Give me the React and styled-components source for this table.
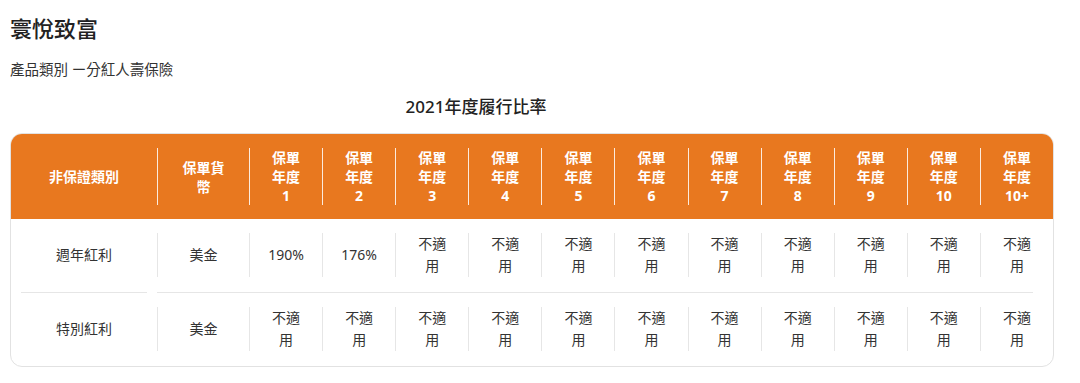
import React from "react";
import styled, { createGlobalStyle } from "styled-components";

const Global = createGlobalStyle`
  html, body { margin: 0; padding: 0; background: #fff; }
  body {
    font-family: "Noto Sans", "Noto Sans CJK TC", sans-serif;
    color: #333;
  }
`;

const Page = styled.div`
  padding: 11px 10px 0 10px;
  width: 1044px;
`;

const Title = styled.h1`
  margin: 0;
  font-size: 22px;
  line-height: 34px;
  font-weight: 500;
  color: #222;
`;

const Subtitle = styled.p`
  margin: 13px 0 0 0;
  font-size: 14.5px;
  line-height: 22px;
  color: #333;
`;

const Caption = styled.h2`
  margin: 14px 0 0 0;
  width: 932px;
  text-align: center;
  font-size: 17px;
  line-height: 26px;
  font-weight: 500;
  color: #222;
`;

const Card = styled.div`
  margin-top: 13px;
  border: 1px solid #e2e2e2;
  border-radius: 12px;
  overflow: hidden;
  display: grid;
  grid-template-columns: 146px 92px repeat(11, 1fr);
`;

const HeadCell = styled.div`
  background: #e8781f;
  padding: 14px 0 14px;
  display: flex;
`;

const HeadInner = styled.div`
  flex: 1;
  display: flex;
  align-items: center;
  justify-content: center;
  text-align: center;
  border-left: ${(p) => (p.$first ? "none" : "1px solid rgba(255,255,255,0.85)")};
  min-height: 55px;
  color: #fff;
  font-weight: 700;
  font-size: 14px;
  line-height: 19px;
`;

const Text = styled.span`
  display: block;
  max-width: ${(p) => p.$max || "40px"};
  word-break: break-all;
`;

const BodyCell = styled.div`
  padding: 14px 0 15px;
  display: flex;
`;

const BodyInner = styled.div`
  flex: 1;
  display: flex;
  align-items: center;
  justify-content: center;
  text-align: center;
  border-left: ${(p) => (p.$first ? "none" : "1px solid #e6e6e6")};
  min-height: 44px;
  font-size: 14px;
  line-height: 22px;
  color: #333;
`;

const DividerLeft = styled.div`
  grid-column: 1 / 2;
  height: 1px;
  background: #e6e6e6;
  margin: 0 10px 0 10px;
`;

const DividerRight = styled.div`
  grid-column: 2 / -1;
  height: 1px;
  background: #e6e6e6;
  margin: 0 20px 0 0;
`;

const years = ["1", "2", "3", "4", "5", "6", "7", "8", "9", "10", "10+"];

const rows = [
  { name: "週年紅利", cur: "美金", vals: ["190%", "176%", ...Array(9).fill("不適用")] },
  { name: "特別紅利", cur: "美金", vals: Array(11).fill("不適用") },
];

export default function App() {
  return (
    <>
      <Global />
      <Page>
        <Title>寰悅致富</Title>
        <Subtitle>產品類別 ー分紅人壽保險</Subtitle>
        <Caption>2021年度履行比率</Caption>
        <Card>
          <HeadCell>
            <HeadInner $first>
              <Text $max="120px">非保證類別</Text>
            </HeadInner>
          </HeadCell>
          <HeadCell>
            <HeadInner>
              <Text $max="48px">保單貨幣</Text>
            </HeadInner>
          </HeadCell>
          {years.map((y) => (
            <HeadCell key={y}>
              <HeadInner>
                <Text>
                  保單年度
                  <br />
                  {y}
                </Text>
              </HeadInner>
            </HeadCell>
          ))}
          {rows.map((r, i) => (
            <React.Fragment key={r.name}>
              {i > 0 && (
                <>
                  <DividerLeft />
                  <DividerRight />
                </>
              )}
              <BodyCell>
                <BodyInner $first>
                  <Text $max="120px">{r.name}</Text>
                </BodyInner>
              </BodyCell>
              <BodyCell>
                <BodyInner>
                  <Text $max="60px">{r.cur}</Text>
                </BodyInner>
              </BodyCell>
              {r.vals.map((v, j) => (
                <BodyCell key={j}>
                  <BodyInner>
                    <Text>{v}</Text>
                  </BodyInner>
                </BodyCell>
              ))}
            </React.Fragment>
          ))}
        </Card>
      </Page>
    </>
  );
}
